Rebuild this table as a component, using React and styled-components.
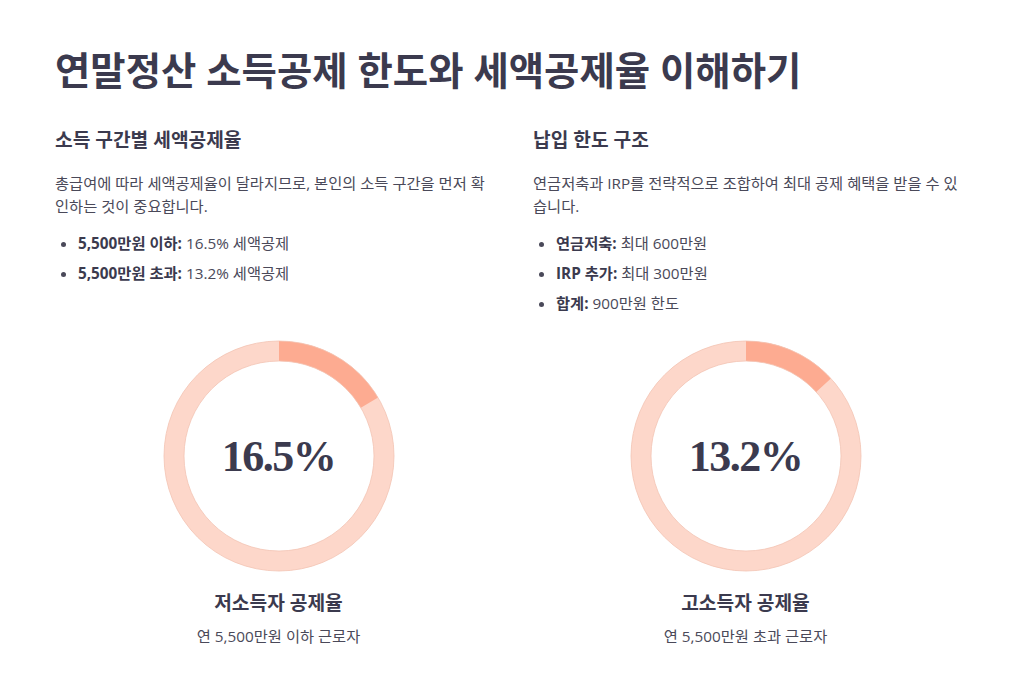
import React from "react";
import styled, { createGlobalStyle } from "styled-components";

const GlobalStyle = createGlobalStyle`
  * { box-sizing: border-box; }
  body {
    margin: 0;
    background: #ffffff;
    color: #3b3a4e;
    font-family: "Open Sans", "Noto Sans CJK KR", sans-serif;
  }
`;

const RING = "#fdd7ca";
const ACCENT = "#fdab91";
const EDGE = "#f3c4b4";

const sections = [
  {
    title: "소득 구간별 세액공제율",
    text: "총급여에 따라 세액공제율이 달라지므로, 본인의 소득 구간을 먼저 확인하는 것이 중요합니다.",
    items: [
      ["5,500만원 이하:", "16.5% 세액공제"],
      ["5,500만원 초과:", "13.2% 세액공제"],
    ],
  },
  {
    title: "납입 한도 구조",
    text: "연금저축과 IRP를 전략적으로 조합하여 최대 공제 혜택을 받을 수 있습니다.",
    items: [
      ["연금저축:", "최대 600만원"],
      ["IRP 추가:", "최대 300만원"],
      ["합계:", "900만원 한도"],
    ],
  },
];

const charts = [
  { value: 16.5, label: "저소득자 공제율", sub: "연 5,500만원 이하 근로자" },
  { value: 13.2, label: "고소득자 공제율", sub: "연 5,500만원 초과 근로자" },
];

function Donut({ value }) {
  const r = 105;
  const c = 2 * Math.PI * r;
  const len = (c * value) / 100;
  return (
    <DonutBox>
      <svg width="232" height="232" viewBox="0 0 232 232">
        <circle cx="116" cy="116" r={r} fill="none" stroke={RING} strokeWidth="20" />
        <circle
          cx="116"
          cy="116"
          r={r}
          fill="none"
          stroke={ACCENT}
          strokeWidth="20"
          strokeDasharray={`${len} ${c}`}
          transform="rotate(-90 116 116)"
        />
        <circle cx="116" cy="116" r="115" fill="none" stroke={EDGE} strokeWidth="0.8" />
        <circle cx="116" cy="116" r="95" fill="none" stroke={EDGE} strokeWidth="0.8" />
      </svg>
      <Value>{value}%</Value>
    </DonutBox>
  );
}

export default function App() {
  return (
    <Page>
      <GlobalStyle />
      <Title>연말정산 소득공제 한도와 세액공제율 이해하기</Title>
      <Columns>
        {sections.map((s) => (
          <Section key={s.title}>
            <Heading>{s.title}</Heading>
            <Text>{s.text}</Text>
            <List>
              {s.items.map(([b, t]) => (
                <Item key={b}>
                  <strong>{b}</strong> {t}
                </Item>
              ))}
            </List>
          </Section>
        ))}
      </Columns>
      <Charts>
        {charts.map((c) => (
          <Chart key={c.label}>
            <Donut value={c.value} />
            <ChartLabel>{c.label}</ChartLabel>
            <ChartSub>{c.sub}</ChartSub>
          </Chart>
        ))}
      </Charts>
    </Page>
  );
}

const Page = styled.div`
  padding: 46px 55px 40px;
`;

const Title = styled.h1`
  margin: 0 0 33px;
  font-size: 38.4px;
  line-height: 48px;
  font-weight: 700;
  color: #3b3a4e;
`;

const Columns = styled.div`
  display: grid;
  grid-template-columns: 1fr 1fr;
  column-gap: 42px;
`;

const Section = styled.section``;

const Heading = styled.h2`
  margin: 0 0 18.5px;
  font-size: 19.2px;
  line-height: 26px;
  font-weight: 700;
  color: #3b3a4e;
`;

const Text = styled.p`
  margin: 0 0 14px;
  font-size: 15.3px;
  line-height: 23px;
  color: #4a4959;
`;

const List = styled.ul`
  margin: 0;
  padding-left: 23px;
  display: flex;
  flex-direction: column;
  gap: 7px;
`;

const Item = styled.li`
  font-size: 15.3px;
  line-height: 23px;
  color: #4a4959;

  strong {
    color: #3b3a4e;
    font-weight: 700;
  }
`;

const Charts = styled.div`
  display: grid;
  grid-template-columns: 1fr 1fr;
  column-gap: 20px;
  margin-top: 25.5px;
`;

const Chart = styled.div`
  display: flex;
  flex-direction: column;
  align-items: center;
`;

const DonutBox = styled.div`
  position: relative;
  width: 232px;
  height: 232px;

  svg {
    display: block;
  }
`;

const Value = styled.div`
  position: absolute;
  inset: 0;
  display: flex;
  align-items: center;
  justify-content: center;
  font-family: "Liberation Serif", serif;
  font-weight: 700;
  font-size: 44px;
  letter-spacing: -1.5px;
  color: #3b3a4e;
`;

const ChartLabel = styled.div`
  margin-top: 18px;
  font-size: 19.2px;
  line-height: 26px;
  font-weight: 700;
  color: #3b3a4e;
`;

const ChartSub = styled.div`
  margin-top: 8.5px;
  font-size: 15.3px;
  line-height: 23px;
  color: #4a4959;
`;
